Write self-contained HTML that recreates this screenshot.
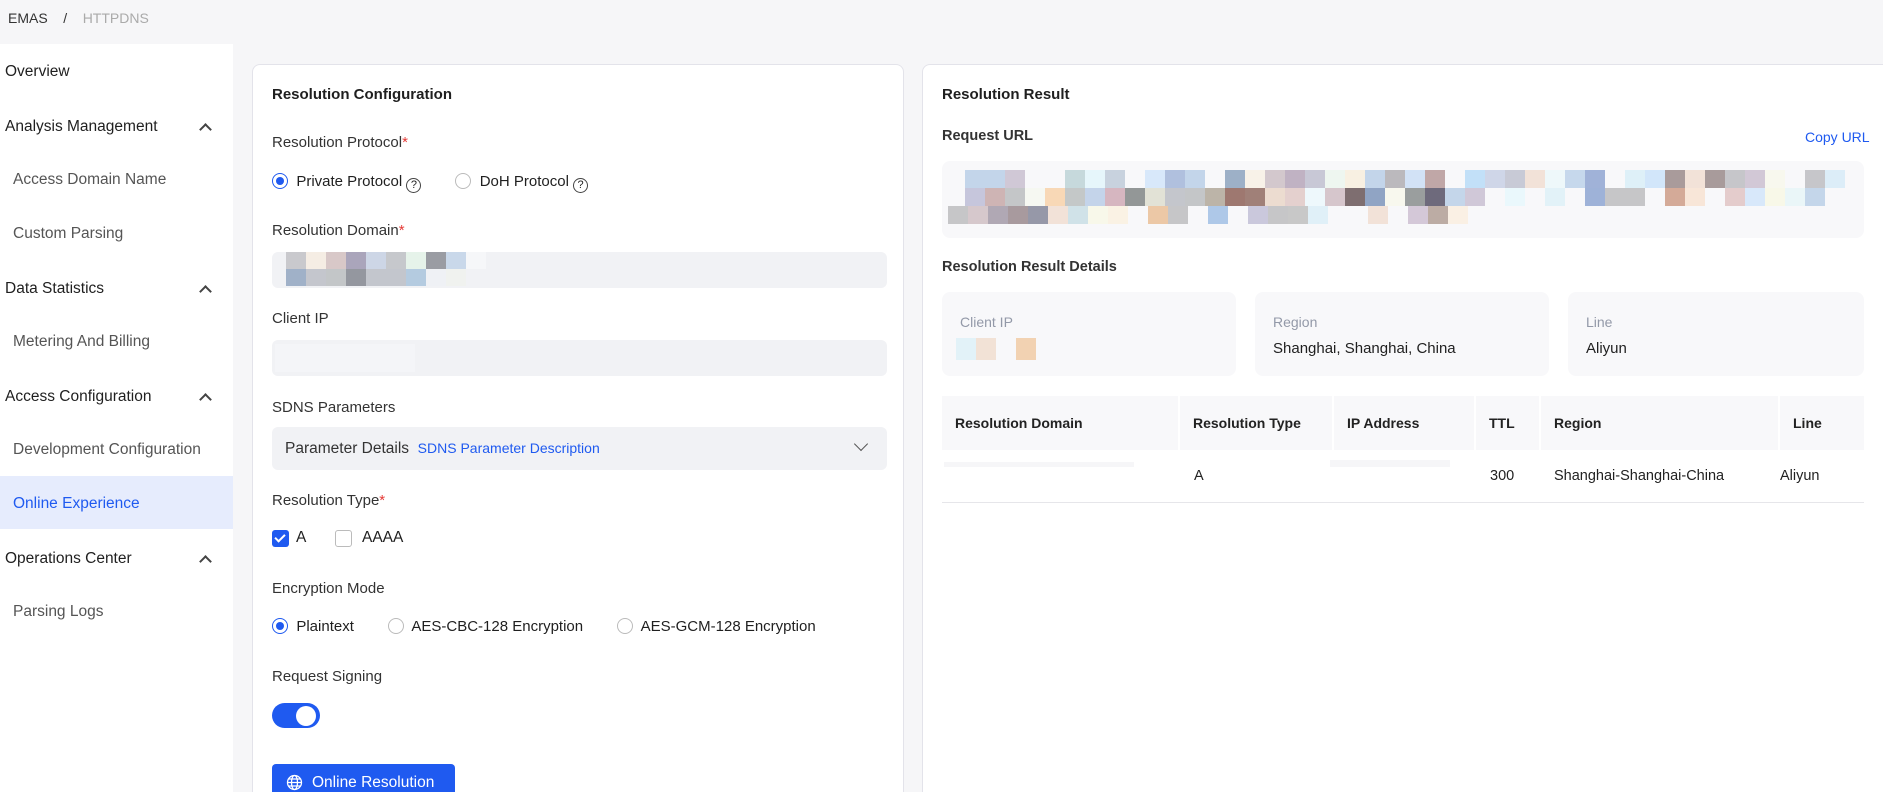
<!DOCTYPE html>
<html><head><meta charset="utf-8"><style>
*{box-sizing:border-box;margin:0;padding:0}
html{width:1883px;height:792px;overflow:hidden}
body{width:1883px;height:792px;overflow:hidden;background:#f6f6f8;font-family:"Liberation Sans",sans-serif;font-size:15px;color:#1f1f1f;position:relative}
.a{position:absolute;white-space:nowrap}
.side{position:absolute;left:0;top:44px;width:233px;height:748px;background:#fff}
.si{position:absolute;left:5px;font-size:15.5px;color:#1f1f1f}
.sub{left:13px;color:#555}
.chev{position:absolute;left:201px;width:9px;height:9px;border-left:2px solid #444;border-top:2px solid #444;transform:rotate(45deg)}
.card{position:absolute;background:#fff;border:1px solid #e3e3ea;border-bottom:none;border-radius:8px 8px 0 0}
.lbl{font-size:15px;color:#333}
.req{color:#e53935}
.inp{position:absolute;background:#f1f2f5;border-radius:6px}
.radio{display:inline-block;width:16px;height:16px;border:1px solid #bbb;border-radius:50%;vertical-align:-3px;position:relative}
.radio.on{border-color:#1f5af0}
.radio.on:after{content:"";position:absolute;left:3px;top:3px;width:8px;height:8px;border-radius:50%;background:#1f5af0}
.q{display:inline-block;width:15px;height:15px;border:1.3px solid #444;border-radius:50%;font-size:11px;text-align:center;line-height:13px;vertical-align:-2px}
.mos{position:absolute;display:flex}
.mos i{display:block;width:20px;height:18px;flex:none}
.dm i{width:20px;height:17px}
.dc{position:absolute;top:292px;height:84px;background:#f8f8fa;border-radius:8px}
.dl{position:absolute;left:18px;top:22px;color:#9399a8;font-size:14px}
.dv{position:absolute;left:18px;top:48px;font-size:15px}
.th{position:absolute;top:396px;height:54px;background:#f8f8fa;font-weight:bold;font-size:14px;color:#222;line-height:54px;padding-left:13px}
.td{position:absolute;top:468px;font-size:14.5px;color:#222}
</style></head><body>
<div class="a" style="left:8px;top:10px;font-size:14px;color:#333">EMAS &nbsp;&nbsp;&nbsp;/&nbsp;&nbsp;&nbsp; <span style="color:#aaa">HTTPDNS</span></div>
<div class="side">
<div style="position:absolute;left:0;top:432px;width:233px;height:53px;background:#e6ecfd"></div>
<div class="si" style="top:19px">Overview</div>
<div class="si" style="top:74px">Analysis Management</div><div class="chev" style="top:81px"></div>
<div class="si sub" style="top:127px">Access Domain Name</div>
<div class="si sub" style="top:181px">Custom Parsing</div>
<div class="si" style="top:236px">Data Statistics</div><div class="chev" style="top:243px"></div>
<div class="si sub" style="top:289px">Metering And Billing</div>
<div class="si" style="top:344px">Access Configuration</div><div class="chev" style="top:351px"></div>
<div class="si sub" style="top:397px">Development Configuration</div>
<div class="si sub" style="top:451px;color:#1f5af0">Online Experience</div>
<div class="si" style="top:506px">Operations Center</div><div class="chev" style="top:513px"></div>
<div class="si sub" style="top:559px">Parsing Logs</div>
</div>

<div class="card" style="left:252px;top:64px;width:652px;height:728px">
<div class="a" style="left:19px;top:21px;font-weight:bold;font-size:15px">Resolution Configuration</div>
<div class="a lbl" style="left:19px;top:69px">Resolution Protocol<span class="req">*</span></div>
<div class="a" style="left:19px;top:108px"><span class="radio on"></span>&nbsp; Private Protocol <span class="q">?</span><span style="display:inline-block;width:34px"></span><span class="radio"></span>&nbsp; DoH Protocol <span class="q">?</span></div>
<div class="a lbl" style="left:19px;top:157px">Resolution Domain<span class="req">*</span></div>
<div class="inp" style="left:19px;top:187px;width:615px;height:36px"></div>
<div class="mos dm" style="left:33px;top:187px"><i style="background:#c9c9cd"></i><i style="background:#f5ede4"></i><i style="background:#d8c8c8"></i><i style="background:#aaa5bb"></i><i style="background:#cdd6e6"></i><i style="background:#c6c8cc"></i><i style="background:#e6f3ea"></i><i style="background:#9a9ca3"></i><i style="background:#c9d8ea"></i><i style="background:#f6f7f9"></i></div>
<div class="mos dm" style="left:33px;top:204px"><i style="background:#a0b1c8"></i><i style="background:#c4c6cd"></i><i style="background:#c3c6c8"></i><i style="background:#94979f"></i><i style="background:#c3c6cd"></i><i style="background:#c3c6cd"></i><i style="background:#b4cbe0"></i><i style="background:#eff1f5"></i><i style="background:#f0f2ef"></i></div>
<div class="a lbl" style="left:19px;top:245px">Client IP</div>
<div class="inp" style="left:19px;top:275px;width:615px;height:36px"></div>
<div class="a" style="left:22px;top:279px;width:140px;height:28px;background:#f4f5f8"></div>
<div class="a lbl" style="left:19px;top:334px">SDNS Parameters</div>
<div class="inp" style="left:19px;top:362px;width:615px;height:43px"></div>
<div class="a" style="left:32px;top:375px;font-size:15.5px;color:#333">Parameter Details &nbsp;<span style="color:#1f5af0;font-size:14px">SDNS Parameter Description</span></div>
<div class="a" style="left:603px;top:374px;width:10px;height:10px;border-right:1.5px solid #555;border-bottom:1.5px solid #555;transform:rotate(45deg)"></div>
<div class="a lbl" style="left:19px;top:427px">Resolution Type<span class="req">*</span></div>
<div class="a" style="left:19px;top:465px;width:17px;height:17px;border-radius:3px;background:#1f5af0"></div>
<div class="a" style="left:24px;top:467px;width:6px;height:10px;border-right:2px solid #fff;border-bottom:2px solid #fff;transform:rotate(45deg)"></div>
<div class="a" style="left:43px;top:464px;font-size:15.5px">A</div>
<div class="a" style="left:82px;top:465px;width:17px;height:17px;border-radius:3px;border:1px solid #bbb"></div>
<div class="a" style="left:109px;top:464px;font-size:15.5px">AAAA</div>
<div class="a lbl" style="left:19px;top:515px">Encryption Mode</div>
<div class="a" style="left:19px;top:553px"><span class="radio on"></span>&nbsp; Plaintext<span style="display:inline-block;width:34px"></span><span class="radio"></span>&nbsp; AES-CBC-128 Encryption<span style="display:inline-block;width:34px"></span><span class="radio"></span>&nbsp; AES-GCM-128 Encryption</div>
<div class="a lbl" style="left:19px;top:603px">Request Signing</div>
<div class="a" style="left:19px;top:638px;width:48px;height:25px;border-radius:13px;background:#1f5af0"></div>
<div class="a" style="left:43px;top:641px;width:20px;height:20px;border-radius:50%;background:#fff"></div>
<div class="a" style="left:19px;top:699px;width:183px;height:40px;border-radius:4px;background:#1f5af0;color:#fff;font-size:15.5px;padding:10px 0 0 40px">Online Resolution</div>
<svg class="a" style="left:33px;top:709px" width="17" height="17" viewBox="0 0 17 17" fill="none" stroke="#fff" stroke-width="1.3"><circle cx="8.5" cy="8.5" r="7"/><ellipse cx="8.5" cy="8.5" rx="3" ry="7"/><path d="M1.5 8.5h14M2.5 5h12M2.5 12h12"/></svg>
</div>

<div class="card" style="left:922px;top:64px;width:975px;height:728px"></div>
<div class="a" style="left:942px;top:86px;font-weight:bold;font-size:15px">Resolution Result</div>
<div class="a" style="left:942px;top:128px;font-weight:bold;font-size:14.5px;color:#333">Request URL</div>
<div class="a" style="left:1805px;top:129px;color:#1f5af0;font-size:14px">Copy URL</div>
<div class="a" style="left:942px;top:161px;width:922px;height:77px;background:#f8f8fa;border-radius:8px;overflow:hidden">
<div class="mos" style="left:23px;top:9px"><i style="background:#c3d5ea"></i><i style="background:#c3d5ea"></i><i style="background:#d0c8d6"></i><i></i><i></i><i style="background:#c6d9dc"></i><i style="background:#e6f6fb"></i><i style="background:#c8d2de"></i><i></i><i style="background:#d8e8fa"></i><i style="background:#b0c0de"></i><i style="background:#c3d5ea"></i><i></i><i style="background:#9db0c7"></i><i style="background:#f8f2e8"></i><i style="background:#d3c8cd"></i><i style="background:#c0b2c3"></i><i style="background:#c8c8d6"></i><i style="background:#eef6f0"></i><i style="background:#f8f0e2"></i><i style="background:#c3d5ea"></i><i style="background:#bbb9bd"></i><i style="background:#d2e2f6"></i><i style="background:#c0a7a7"></i><i></i><i style="background:#c2e0f8"></i><i style="background:#cfd6e8"></i><i style="background:#c8cad6"></i><i style="background:#f2e2d8"></i><i style="background:#eef8fa"></i><i style="background:#c6d8ec"></i><i style="background:#a0b2d8"></i><i></i><i style="background:#def0f8"></i><i style="background:#d2e6fa"></i><i style="background:#a99b9b"></i><i style="background:#f2e2d8"></i><i style="background:#a89b9b"></i><i style="background:#c6c6ca"></i><i style="background:#d2c8d6"></i><i style="background:#f8f8ee"></i><i></i><i style="background:#c6c6ca"></i><i style="background:#dcedf8"></i></div>
<div class="mos" style="left:23px;top:27px"><i style="background:#c6c6dc"></i><i style="background:#ceb4b4"></i><i style="background:#c4c6c8"></i><i style="background:#f6f8f2"></i><i style="background:#f8d8b6"></i><i style="background:#c4c8c8"></i><i style="background:#c4d4ea"></i><i style="background:#d6b6c0"></i><i style="background:#939797"></i><i style="background:#e2e2d6"></i><i style="background:#c4c6cc"></i><i style="background:#c4c6c8"></i><i style="background:#bcb4a8"></i><i style="background:#9e7870"></i><i style="background:#a08078"></i><i style="background:#ecdcd0"></i><i style="background:#e4d0ce"></i><i style="background:#eef8fc"></i><i style="background:#d6c6cc"></i><i style="background:#7e6e70"></i><i style="background:#90a4c4"></i><i style="background:#f8f8ee"></i><i style="background:#9a9e9e"></i><i style="background:#6e6a7c"></i><i style="background:#c4d6ea"></i><i style="background:#d0c8d8"></i><i></i><i style="background:#eaf8fc"></i><i></i><i style="background:#e2f2f8"></i><i></i><i style="background:#9eb2d8"></i><i style="background:#c6c6c8"></i><i style="background:#c6c6c8"></i><i></i><i style="background:#d4aa98"></i><i style="background:#f8e6d8"></i><i></i><i style="background:#e4cccc"></i><i style="background:#d8e8fa"></i><i style="background:#f8f8e8"></i><i style="background:#eaf6f8"></i><i style="background:#c4d6ea"></i></div>
<div class="mos" style="left:6px;top:45px"><i style="background:#c6c6c8"></i><i style="background:#d6c8cc"></i><i style="background:#b0a8b4"></i><i style="background:#a89a9e"></i><i style="background:#9698a8"></i><i style="background:#f2e2d8"></i><i style="background:#d0e2e8"></i><i style="background:#f8f8ea"></i><i style="background:#faf2e4"></i><i></i><i style="background:#ecc8a6"></i><i style="background:#c6c6c8"></i><i></i><i style="background:#aec8e8"></i><i></i><i style="background:#cac8dc"></i><i style="background:#c6c6c8"></i><i style="background:#c8c8c8"></i><i style="background:#e0f0f8"></i><i></i><i></i><i style="background:#f2e2d8"></i><i></i><i style="background:#d4c8d8"></i><i style="background:#bcaca4"></i><i style="background:#faf0e4"></i></div>
</div>
<div class="a" style="left:942px;top:259px;font-weight:bold;font-size:14.5px;color:#333">Resolution Result Details</div>
<div class="dc" style="left:942px;width:294px"><div class="dl">Client IP</div>
<div class="mos" style="left:14px;top:46px"><i style="background:#e2f2f8;height:22px;width:20px"></i><i style="background:#f2e2d6;height:22px;width:20px"></i><i style="width:20px"></i><i style="background:#f2d2b2;height:22px;width:20px"></i></div></div>
<div class="dc" style="left:1255px;width:294px"><div class="dl">Region</div><div class="dv">Shanghai, Shanghai, China</div></div>
<div class="dc" style="left:1568px;width:296px"><div class="dl">Line</div><div class="dv">Aliyun</div></div>
<div class="th" style="left:942px;width:236px">Resolution Domain</div>
<div class="th" style="left:1180px;width:152px">Resolution Type</div>
<div class="th" style="left:1334px;width:140px">IP Address</div>
<div class="th" style="left:1476px;width:63px">TTL</div>
<div class="th" style="left:1541px;width:237px">Region</div>
<div class="th" style="left:1780px;width:84px">Line</div>
<div class="a" style="left:944px;top:462px;width:190px;height:5px;background:#f6f6f8"></div>
<div class="a" style="left:1330px;top:460px;width:120px;height:7px;background:#f6f6f8"></div>
<div class="td" style="left:1194px">A</div>
<div class="td" style="left:1490px">300</div>
<div class="td" style="left:1554px">Shanghai-Shanghai-China</div>
<div class="td" style="left:1780px">Aliyun</div>
<div class="a" style="left:942px;top:502px;width:922px;height:1px;background:#e6e6ea"></div>
</body></html>
